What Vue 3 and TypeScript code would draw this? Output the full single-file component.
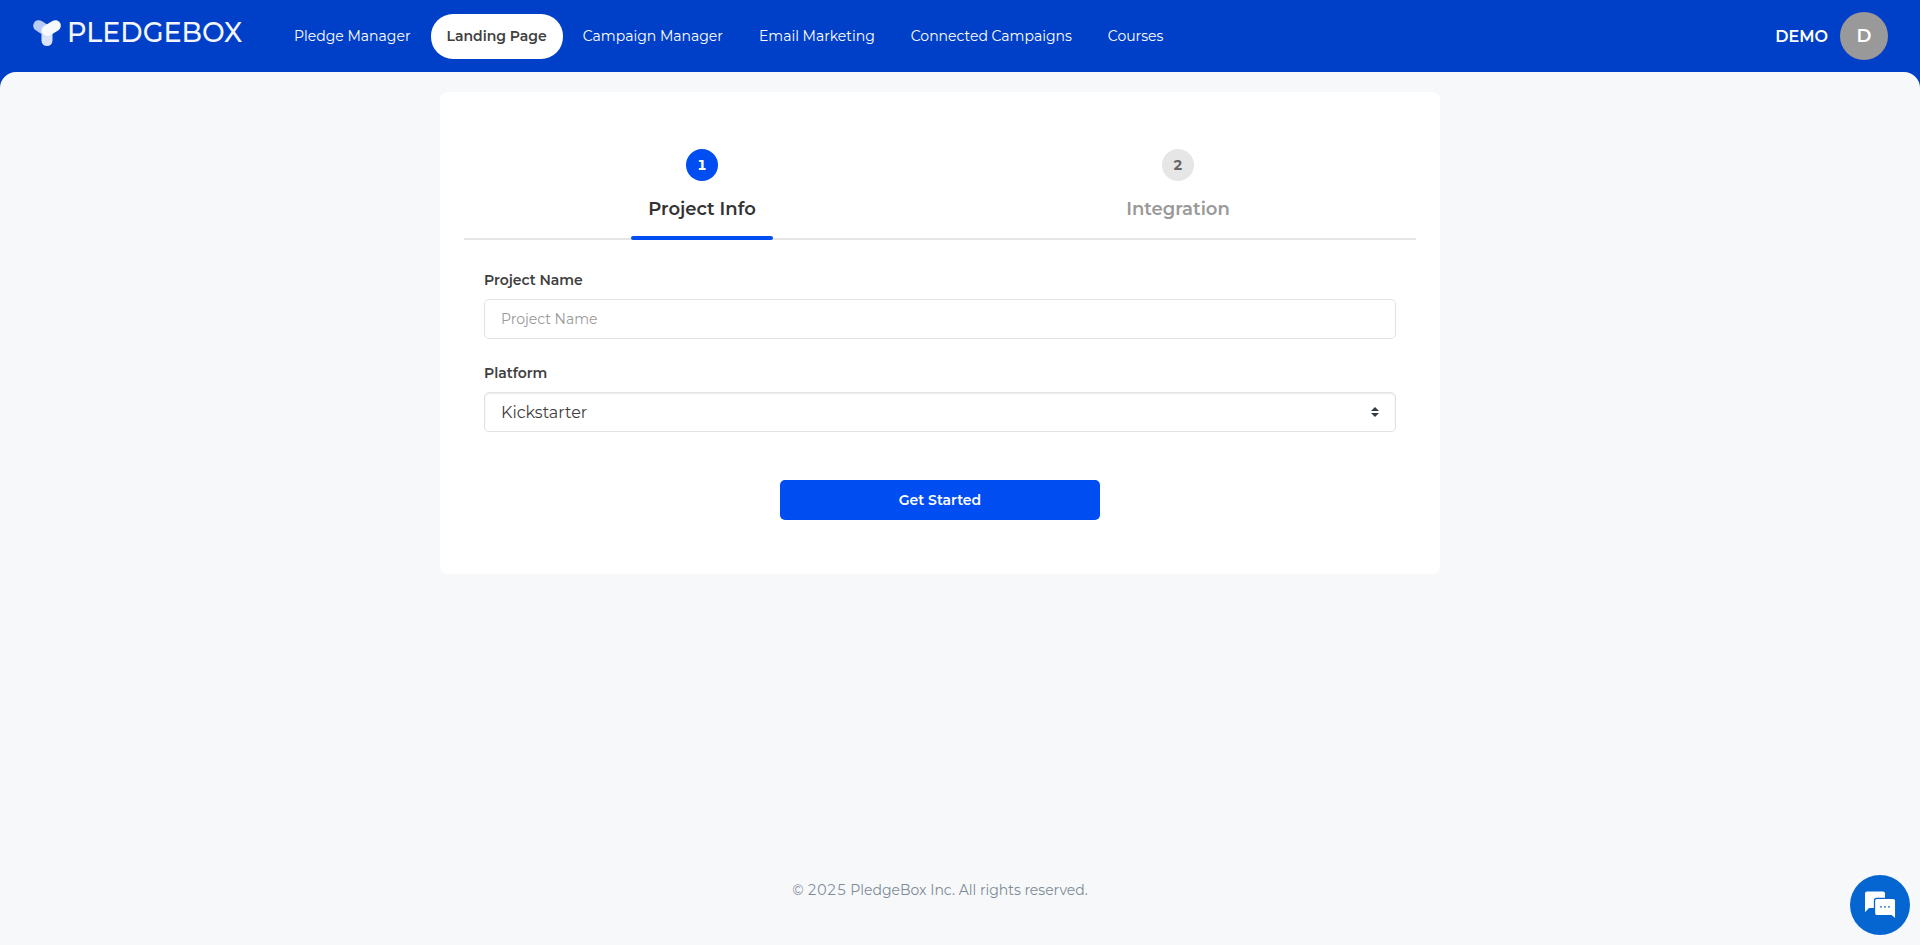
<script setup lang="ts">
import { ref } from 'vue'

const navItems: string[] = [
  'Pledge Manager',
  'Landing Page',
  'Campaign Manager',
  'Email Marketing',
  'Connected Campaigns',
  'Courses',
]
const activeNav = ref('Landing Page')

const steps: string[] = ['Project Info', 'Integration']
const activeStep = ref(0)

const projectName = ref('')
const platforms: string[] = ['Kickstarter', 'Indiegogo']
const platform = ref('Kickstarter')
</script>

<template>
  <div class="page">
    <header class="topbar">
      <a class="logo" href="#" aria-label="PledgeBox home">
        <svg class="logo-mark" viewBox="0 0 28 26" width="28" height="26" aria-hidden="true">
          <g fill="none" stroke-width="11" stroke-linecap="round">
            <path d="M14 11V20.5" stroke="#dbe3f8" />
            <path d="M5.7 5.7L14 11" stroke="#b9cbf6" />
            <path d="M22.3 5.7L14 10.7" stroke="#f8f9fb" />
          </g>
        </svg>
        <span class="logo-text">PLEDGEBOX</span>
      </a>
      <nav class="nav">
        <a
          v-for="item in navItems"
          :key="item"
          href="#"
          class="nav-link"
          :class="{ active: item === activeNav }"
          @click.prevent="activeNav = item"
        >{{ item }}</a>
      </nav>
      <button class="account" type="button">
        <span class="account-name">DEMO</span>
        <span class="avatar">D</span>
      </button>
    </header>

    <div class="body">
      <main class="card">
        <ol class="steps">
          <li
            v-for="(step, index) in steps"
            :key="step"
            class="step"
            :class="{ current: index === activeStep }"
          >
            <span class="step-number">{{ index + 1 }}</span>
            <span class="step-title">{{ step }}</span>
            <span class="step-bar"></span>
          </li>
        </ol>
        <form class="form" @submit.prevent="activeStep = 1">
          <div class="field">
            <label for="project-name">Project Name</label>
            <input id="project-name" v-model="projectName" type="text" placeholder="Project Name" />
          </div>
          <div class="field">
            <label for="platform">Platform</label>
            <div class="select-wrap">
              <select id="platform" v-model="platform">
                <option v-for="name in platforms" :key="name" :value="name">{{ name }}</option>
              </select>
              <svg class="caret" viewBox="0 0 8 10" width="8" height="10" aria-hidden="true">
                <path d="M4 0L8 4H0ZM0 6H8L4 10Z" fill="#343a40" />
              </svg>
            </div>
          </div>
          <button class="submit" type="submit">Get Started</button>
        </form>
      </main>
      <footer class="footer">© 2025 PledgeBox Inc. All rights reserved.</footer>
    </div>

    <button class="chat" type="button" aria-label="Open chat">
      <svg viewBox="0 0 32 28" width="32" height="28" aria-hidden="true">
        <path d="M3 0.5H19Q21 0.5 21 2.5V15Q21 17 19 17H5L1 21.3V2.5Q1 0.5 3 0.5Z" fill="#fff" />
        <path d="M12.8 7.3H29.2Q31.7 7.3 31.7 9.8V28.6L27.4 24.6H12.8Q10.5 24.6 10.5 22.3V9.8Q10.5 7.3 12.8 7.3Z" fill="#fff" stroke="#0566d1" stroke-width="1.3" />
        <g fill="#0566d1">
          <circle cx="17" cy="15.8" r="0.9" />
          <circle cx="21" cy="15.8" r="0.9" />
          <circle cx="25" cy="15.8" r="0.9" />
        </g>
      </svg>
    </button>
  </div>
</template>

<style>
body {
  margin: 0;
  background: #0040c8;
}
</style>

<style scoped>
.page,
.page * {
  box-sizing: border-box;
}

.page {
  display: flex;
  flex-direction: column;
  min-height: 100vh;
  background: #0040c8;
  color: #404040;
  font-family: Montserrat, Inter, "Liberation Sans", sans-serif;
  font-size: 14px;
  font-variant-numeric: tabular-nums;
}

button,
input,
select {
  font-family: inherit;
}

.topbar {
  display: flex;
  align-items: center;
  height: 72px;
  padding: 0 32px 0 33px;
}

.logo {
  display: flex;
  align-items: center;
  gap: 6px;
  width: 245px;
  padding-bottom: 6px;
  color: #f4f6fb;
  text-decoration: none;
}

.logo-text {
  font-size: 27px;
  font-weight: 500;
  line-height: 32px;
}

.nav {
  display: flex;
  flex: 1;
  gap: 4px;
}

.nav-link {
  padding: 0 16px;
  border-radius: 22px;
  color: #fff;
  font-weight: 400;
  line-height: 45px;
  text-decoration: none;
  white-space: nowrap;
}

.nav-link.active {
  background: #fff;
  color: #404040;
  font-weight: 600;
}

.account {
  display: flex;
  align-items: center;
  gap: 12px;
  padding: 0;
  border: 0;
  background: none;
  color: #fff;
  cursor: pointer;
}

.account-name {
  font-size: 16px;
  font-weight: 600;
}

.avatar {
  width: 48px;
  border-radius: 50%;
  background: #999;
  font-size: 18px;
  font-weight: 600;
  line-height: 48px;
  text-align: center;
}

.body {
  display: flex;
  flex: 1;
  flex-direction: column;
  align-items: center;
  padding: 20px 60px 44px 20px;
  border-radius: 16px 16px 0 0;
  background: #f7f8fa;
}

.card {
  width: 100%;
  max-width: 1000px;
  padding: 57px 24px 54px;
  border-radius: 8px;
  background: #fff;
}

.steps {
  display: flex;
  margin: 0;
  padding: 0;
  border-bottom: 2px solid #e5e5e5;
  list-style: none;
}

.step {
  display: flex;
  flex: 1;
  flex-direction: column;
  align-items: center;
  color: #999;
}

.step-number {
  width: 32px;
  border-radius: 50%;
  background: #e6e6e6;
  color: #666;
  font-weight: 700;
  line-height: 32px;
  text-align: center;
}

.step-title {
  margin: 16px 0 15px;
  font-size: 18px;
  font-weight: 600;
  line-height: 24px;
}

.step-bar {
  width: 30%;
  height: 4px;
  margin-bottom: -2px;
  border-radius: 2px;
}

.current {
  color: #333;
}

.current .step-number {
  background: #004df2;
  color: #fff;
}

.current .step-bar {
  background: #004df2;
}

.form {
  display: flex;
  flex-direction: column;
  padding: 28px 20px 0;
}

.field {
  display: flex;
  flex-direction: column;
  gap: 7px;
  margin-bottom: 22px;
}

.field label {
  font-weight: 600;
  line-height: 24px;
}

.field input,
.field select {
  width: 100%;
  height: 40px;
  padding: 0 16px;
  border: 1px solid #e2e2e2;
  border-radius: 5px;
  outline: 0;
  background: #fff;
  color: #404040;
}

.field input {
  font-size: 14px;
}

.field input::placeholder {
  color: #999;
}

.field select {
  box-shadow: inset 0 1px 2px rgba(0, 0, 0, 0.08);
  font-size: 16px;
  appearance: none;
}

.select-wrap {
  position: relative;
}

.caret {
  position: absolute;
  top: 15px;
  right: 17px;
  pointer-events: none;
}

.submit {
  align-self: center;
  width: 320px;
  max-width: 100%;
  height: 40px;
  margin-top: 26px;
  border: 0;
  border-radius: 5px;
  background: #004df2;
  color: #fff;
  font-size: 14px;
  font-weight: 600;
  cursor: pointer;
}

.footer {
  margin-top: auto;
  color: #7d8b97;
  line-height: 22px;
}

.chat {
  position: fixed;
  right: 10px;
  bottom: 10px;
  display: flex;
  align-items: center;
  justify-content: center;
  width: 60px;
  height: 60px;
  padding: 0;
  border: 0;
  border-radius: 50%;
  background: #0566d1;
  cursor: pointer;
}

.chat svg {
  overflow: visible;
}
</style>
